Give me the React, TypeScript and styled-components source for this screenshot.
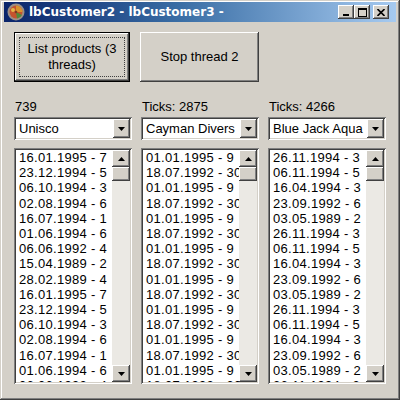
import React from "react";
import styled, { createGlobalStyle } from "styled-components";

const face = "#d4d0c8";
const raised = `inset -1px -1px #404040, inset 1px 1px #ffffff, inset -2px -2px #808080, inset 2px 2px ${face}`;
const sunken = `inset 1px 1px #808080, inset -1px -1px #ffffff, inset 2px 2px #404040, inset -2px -2px ${face}`;

const GlobalStyle = createGlobalStyle`
   html, body {
      margin: 0;
      padding: 0;
      background: ${face};
   }
   body {
      font-family: "Liberation Sans", Arial, sans-serif;
      font-size: 13px;
      color: #000;
   }
`;

const Window = styled.div`
   width: 400px;
   height: 400px;
   box-sizing: border-box;
   background: ${face};
   padding: 2px 4px 4px 4px;
   box-shadow: inset -1px -1px #404040, inset 1px 1px ${face},
      inset -2px -2px #808080, inset 2px 2px #ffffff;
   display: flex;
   flex-direction: column;
`;

const TitleBar = styled.div`
   height: 20px;
   display: flex;
   align-items: center;
   padding: 0 7px 0 3px;
   background: linear-gradient(to right, #0a246a, #3a6ea5 45%, #a6caf0);
`;

const TitleText = styled.span`
   flex: 1;
   margin-left: 4px;
   color: #ffffff;
   font-family: "DejaVu Sans", Verdana, sans-serif;
   font-weight: bold;
   font-size: 12px;
   white-space: nowrap;
`;

const TitleButton = styled.div<{ $gap?: number }>`
   width: 16px;
   height: 14px;
   margin-left: ${({ $gap }) => $gap || 0}px;
   background: ${face};
   box-shadow: ${raised};
   display: flex;
   align-items: center;
   justify-content: center;
`;

const Body = styled.div`
   padding: 10px 0 0 10px;
`;

const ButtonRow = styled.div`
   display: flex;
   gap: 10px;
`;

const PushButton = styled.button<{ $width: number; $isDefault?: boolean }>`
   position: relative;
   width: ${({ $width }) => $width}px;
   height: 50px;
   padding: 0;
   margin: 0;
   background: ${face};
   font-family: "Liberation Sans", Arial, sans-serif;
   font-size: 13px;
   line-height: 16px;
   color: #000;
   border: ${({ $isDefault }) => ($isDefault ? "1px solid #000" : "none")};
   box-shadow: ${raised};
   text-align: center;
   outline: none;
`;

const FocusRect = styled.span`
   position: absolute;
   inset: 4px;
   border: 1px dotted #404040;
   display: flex;
   align-items: center;
   justify-content: center;
`;

const Columns = styled.div`
   display: grid;
   grid-template-columns: repeat(3, 118px);
   column-gap: 9px;
   margin-top: 17px;
`;

const Column = styled.div`
   display: flex;
   flex-direction: column;
`;

const Label = styled.div`
   height: 15px;
   line-height: 15px;
   padding-left: 1px;
`;

const Combo = styled.div`
   margin-top: 3px;
   height: 23px;
   box-sizing: border-box;
   padding: 2px;
   background: #ffffff;
   box-shadow: ${sunken};
   display: flex;
`;

const ComboText = styled.div`
   flex: 1;
   padding-left: 3px;
   line-height: 19px;
   white-space: nowrap;
   overflow: hidden;
`;

const DropButton = styled.div`
   width: 17px;
   height: 19px;
   background: ${face};
   box-shadow: ${raised};
   display: flex;
   align-items: center;
   justify-content: center;
`;

const ListBox = styled.div`
   margin-top: 8px;
   height: 236px;
   box-sizing: border-box;
   padding: 2px;
   background: #ffffff;
   box-shadow: ${sunken};
   display: flex;
`;

const Items = styled.div`
   flex: 1;
   overflow: hidden;
   padding-left: 3px;
`;

const Item = styled.div`
   line-height: 15.2px;
   white-space: nowrap;
   letter-spacing: 0.3px;
`;

const ScrollBar = styled.div`
   width: 18px;
   display: flex;
   flex-direction: column;
   background: #ebe9e4;
`;

const ScrollButton = styled.div<{ $height: number }>`
   height: ${({ $height }) => $height}px;
   background: ${face};
   box-shadow: ${raised};
   display: flex;
   align-items: center;
   justify-content: center;
`;

const Track = styled.div`
   flex: 1;
`;

const Arrow: React.FC<{ up?: boolean }> = ({ up }) => (
   <svg width="7" height="4" viewBox="0 0 7 4">
      <polygon points={up ? "3.5,0 7,4 0,4" : "0,0 7,0 3.5,4"} fill="#000" />
   </svg>
);

const AppIcon = () => (
   <svg width="18" height="18" viewBox="0 0 18 18">
      <circle cx="9" cy="9" r="8.5" fill="#9a8f86" />
      <circle cx="9" cy="9" r="6.5" fill="#c4532e" />
      <path d="M9 2.5 A6.5 6.5 0 0 1 15.5 9 L9 9 Z" fill="#d8922c" />
      <path d="M9 9 L15 12 A6.5 6.5 0 0 1 10 15.4 Z" fill="#4f8a3a" />
      <circle cx="6" cy="7" r="2" fill="#e2b64a" />
      <circle cx="9" cy="9" r="1.3" fill="#7a3a22" />
   </svg>
);

const MinGlyph = () => (
   <svg width="8" height="8" viewBox="0 0 8 8">
      <rect x="1" y="6" width="6" height="2" fill="#000" />
   </svg>
);

const MaxGlyph = () => (
   <svg width="9" height="9" viewBox="0 0 9 9">
      <rect x="0.5" y="0.5" width="8" height="8" fill="none" stroke="#000" />
      <rect x="0" y="0" width="9" height="2" fill="#000" />
   </svg>
);

const CloseGlyph = () => (
   <svg width="8" height="7" viewBox="0 0 8 7">
      <path d="M0.5 0 L7.5 7 M7.5 0 L0.5 7" stroke="#000" strokeWidth="1.6" />
   </svg>
);

const list1 = [
   "16.01.1995 - 7",
   "23.12.1994 - 5",
   "06.10.1994 - 3",
   "02.08.1994 - 6",
   "16.07.1994 - 1",
   "01.06.1994 - 6",
   "06.06.1992 - 4",
   "15.04.1989 - 2",
   "28.02.1989 - 4",
];
const list2 = ["01.01.1995 - 9", "18.07.1992 - 30"];
const list3 = [
   "26.11.1994 - 3",
   "06.11.1994 - 5",
   "16.04.1994 - 3",
   "23.09.1992 - 6",
   "03.05.1989 - 2",
];

const fill = (src: string[], n: number) =>
   Array.from({ length: n }, (_, i) => src[i % src.length]);

const columns = [
   { label: "739", combo: "Unisco", rows: fill(list1, 16) },
   { label: "Ticks: 2875", combo: "Cayman Divers", rows: fill(list2, 16) },
   { label: "Ticks: 4266", combo: "Blue Jack Aqua", rows: fill(list3, 16) },
];

const App: React.FC = () => {
   return (
      <>
         <GlobalStyle />
         <Window>
            <TitleBar>
               <AppIcon />
               <TitleText>lbCustomer2 - lbCustomer3 -</TitleText>
               <TitleButton>
                  <MinGlyph />
               </TitleButton>
               <TitleButton>
                  <MaxGlyph />
               </TitleButton>
               <TitleButton $gap={3}>
                  <CloseGlyph />
               </TitleButton>
            </TitleBar>
            <Body>
               <ButtonRow>
                  <PushButton $width={116} $isDefault>
                     <FocusRect>
                        List products (3
                        <br />
                        threads)
                     </FocusRect>
                  </PushButton>
                  <PushButton $width={119}>Stop thread 2</PushButton>
               </ButtonRow>
               <Columns>
                  {columns.map((col) => (
                     <Column key={col.label}>
                        <Label>{col.label}</Label>
                        <Combo>
                           <ComboText>{col.combo}</ComboText>
                           <DropButton>
                              <Arrow />
                           </DropButton>
                        </Combo>
                        <ListBox>
                           <Items>
                              {col.rows.map((r, i) => (
                                 <Item key={i}>{r}</Item>
                              ))}
                           </Items>
                           <ScrollBar>
                              <ScrollButton $height={17}>
                                 <Arrow up />
                              </ScrollButton>
                              <ScrollButton $height={14} />
                              <Track />
                              <ScrollButton $height={17}>
                                 <Arrow />
                              </ScrollButton>
                           </ScrollBar>
                        </ListBox>
                     </Column>
                  ))}
               </Columns>
            </Body>
         </Window>
      </>
   );
};

export default App;
